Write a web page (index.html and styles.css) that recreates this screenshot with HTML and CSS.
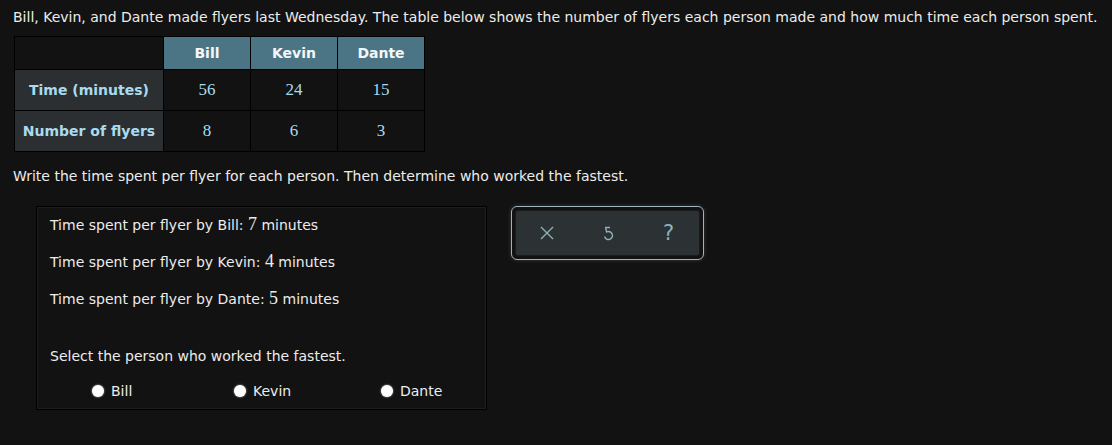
FILE: index.html
```html
<!DOCTYPE html>
<html>
<head>
<meta charset="utf-8">
<link rel="stylesheet" href="styles.css">
</head>
<body>
<p class="intro">Bill, Kevin, and Dante made flyers last Wednesday. The table below shows the number of flyers each person made and how much time each person spent.</p>
<table class="data">
  <tr>
    <th class="corner"></th>
    <th class="col">Bill</th>
    <th class="col">Kevin</th>
    <th class="col">Dante</th>
  </tr>
  <tr>
    <th class="rowh">Time (minutes)</th>
    <td>56</td><td>24</td><td>15</td>
  </tr>
  <tr>
    <th class="rowh">Number of flyers</th>
    <td>8</td><td>6</td><td>3</td>
  </tr>
</table>
<p class="prompt">Write the time spent per flyer for each person. Then determine who worked the fastest.</p>
<div class="work">
  <div class="answer">
    <p class="line">Time spent per flyer by Bill: <span class="num">7</span> minutes</p>
    <p class="line">Time spent per flyer by Kevin: <span class="num">4</span> minutes</p>
    <p class="line">Time spent per flyer by Dante: <span class="num">5</span> minutes</p>
    <p class="select">Select the person who worked the fastest.</p>
    <div class="choices">
      <label class="choice"><span class="radio"></span>Bill</label>
      <label class="choice"><span class="radio"></span>Kevin</label>
      <label class="choice"><span class="radio"></span>Dante</label>
    </div>
  </div>
  <div class="tools">
    <div class="tools-inner">
      <span class="tool">
        <svg width="14" height="14" viewBox="0 0 14 14"><path d="M1 1 L13 13 M13 1 L1 13" stroke="#8fb0b8" stroke-width="1.4" fill="none"/></svg>
      </span>
      <span class="tool">
        <svg width="14" height="16" viewBox="0 0 14 16"><path d="M9 2.5 L4.6 2.5 L5.6 7 A4 4 0 1 1 3.6 11.5" stroke="#8fb0b8" stroke-width="1.4" fill="none" stroke-linejoin="round"/></svg>
      </span>
      <span class="tool qmark">?</span>
    </div>
  </div>
</div>
</body>
</html>
```
FILE: styles.css
```css
html, body {
  margin: 0;
  padding: 0;
  background: #121212;
}
body {
  font-family: "DejaVu Sans", Verdana, sans-serif;
  font-size: 14px;
  color: #ececec;
  padding: 6px 13px;
}
p { margin: 0; }
.intro {
  line-height: 22px;
  white-space: nowrap;
}
.data {
  border-collapse: collapse;
  margin: 8px 0 0 1px;
}
.data th, .data td {
  border: 1px solid #000;
  text-align: center;
  padding: 0;
}
.data th {
  font-weight: bold;
  font-size: 14px;
}
.corner {
  width: 148px;
  height: 32px;
  background: #121212;
}
.col {
  width: 86px;
  background: #4b7585;
  color: #f4f7f8;
}
.rowh {
  background: #2b2f31;
  color: #a9dbef;
  height: 40px;
}
.data td {
  font-family: "Liberation Serif", "Times New Roman", serif;
  font-size: 17px;
  color: #a9dbef;
  background: #121212;
}
.prompt {
  margin-top: 13px;
  line-height: 22px;
}
.work {
  display: flex;
  align-items: flex-start;
  margin-top: 19px;
  margin-left: 23px;
}
.answer {
  width: 449px;
  height: 202px;
  border: 1px solid #000;
  box-shadow: inset 0 0 0 1px #1e1e1e;
}
.line {
  margin-left: 13px;
  line-height: 22px;
  margin-top: 7px;
}
.line + .line { margin-top: 15px; }
.num {
  font-family: "Liberation Serif", "Times New Roman", serif;
  font-size: 18px;
  line-height: 0;
}
.select {
  margin-left: 13px;
  margin-top: 35px;
  line-height: 22px;
}
.choices {
  display: grid;
  grid-template-columns: 142px 147px 100px;
  margin-left: 55px;
  margin-top: 14px;
}
.choice {
  display: flex;
  align-items: center;
  gap: 7px;
  line-height: 20px;
}
.radio {
  width: 12px;
  height: 12px;
  border-radius: 50%;
  background: #fff;
  box-shadow: 0 0 2px #ccc;
}
.tools {
  margin-left: 24px;
  width: 193px;
  height: 54px;
  border: 1px solid #9fb3b9;
  border-radius: 6px;
  padding: 3px;
  box-sizing: border-box;
  background: #121212;
  box-shadow: 0 0 4px rgba(160,180,185,0.25);
}
.tools-inner {
  height: 100%;
  background: #2c3133;
  border: 1px solid #1a1d1e;
  border-radius: 3px;
  display: flex;
  align-items: center;
  justify-content: center;
  gap: 41px;
  box-sizing: border-box;
}
.tool {
  display: flex;
  align-items: center;
  justify-content: center;
  width: 20px;
  height: 20px;
}
.qmark {
  font-family: "DejaVu Sans", sans-serif;
  font-size: 21px;
  color: #8fb0b8;
}
```
